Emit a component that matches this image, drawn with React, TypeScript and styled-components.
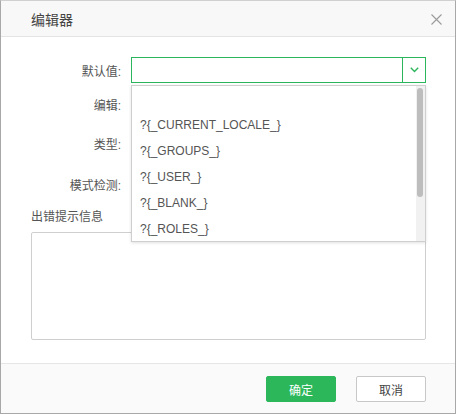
import React from "react";
import styled, { createGlobalStyle } from "styled-components";

const Global = createGlobalStyle`
  html, body { margin: 0; padding: 0; background: #fff; }
  body { font-family: "Liberation Sans", Arial, "Noto Sans CJK SC", sans-serif; }
  * { box-sizing: border-box; }
`;

const Dialog = styled.div`
  width: 456px;
  height: 414px;
  border: 1px solid #a8a8a8;
  border-top-color: #d0d0d0;
  display: flex;
  flex-direction: column;
  background: #fff;
  position: relative;
`;

const Header = styled.div`
  height: 36px;
  flex: none;
  background: #f8f8f8;
  border-bottom: 1px solid #e4e4e4;
  display: flex;
  align-items: center;
  justify-content: space-between;
  padding: 0 13px 0 30px;
`;

const Title = styled.div`
  font-size: 14px;
  color: #444;
`;

const Close = styled.button`
  border: none;
  background: transparent;
  padding: 0;
  width: 12px;
  height: 12px;
  display: flex;
  align-items: center;
  justify-content: center;
  margin-top: 1px;
`;

const Body = styled.div`
  flex: 1;
  padding: 20px 29px 0 30px;
  display: flex;
  flex-direction: column;
`;

const Row = styled.div<{ $mt: number }>`
  display: flex;
  align-items: center;
  height: 26px;
  margin-top: ${(p) => p.$mt}px;
  position: relative;
`;

const Label = styled.div`
  width: 91px;
  padding-right: 1px;
  text-align: right;
  font-size: 12px;
  color: #555;
  flex: none;
`;

const Field = styled.div`
  flex: 1;
  margin-left: 9px;
  position: relative;
  height: 100%;
`;

const Select = styled.div`
  height: 26px;
  border: 1px solid #2bb55c;
  display: flex;
  background: #fff;
`;

const SelectInput = styled.div`
  flex: 1;
`;

const SelectArrow = styled.div`
  width: 23px;
  border-left: 1px solid #2bb55c;
  display: flex;
  align-items: center;
  justify-content: center;
`;

const Dropdown = styled.div`
  position: absolute;
  top: 28px;
  left: 0;
  right: 0;
  height: 157px;
  background: #fff;
  border: 1px solid #cfcfcf;
  box-shadow: 0 1px 3px rgba(0, 0, 0, 0.12);
  z-index: 10;
  overflow: hidden;
`;

const Item = styled.div`
  height: 26px;
  line-height: 26px;
  padding-left: 8px;
  font-size: 12px;
  color: #555;
  white-space: nowrap;
`;

const Track = styled.div`
  position: absolute;
  top: 0;
  right: 0;
  width: 9px;
  bottom: 0;
  background: #f1f1f1;
`;

const Thumb = styled.div`
  position: absolute;
  top: 2px;
  left: 1px;
  width: 6px;
  height: 109px;
  border-radius: 3px;
  background: #bdbdbd;
`;

const MsgLabel = styled.div`
  font-size: 12px;
  color: #555;
  margin-top: 12px;
  line-height: 16px;
`;

const TextArea = styled.div`
  margin-top: 7px;
  height: 108px;
  border: 1px solid #cfcfcf;
  border-radius: 2px;
  background: #fff;
`;

const Footer = styled.div`
  height: 50px;
  flex: none;
  background: #fafafa;
  border-top: 1px solid #e6e6e6;
  display: flex;
  justify-content: flex-end;
  align-items: flex-start;
  padding: 12px 29px 0 0;
  gap: 20px;
`;

const Button = styled.button<{ $primary?: boolean }>`
  width: 70px;
  height: 26px;
  border-radius: 2px;
  font-size: 12px;
  font-family: "Liberation Sans", Arial, "Noto Sans CJK SC", sans-serif;
  cursor: pointer;
  border: 1px solid ${(p) => (p.$primary ? "#2bb75a" : "#c8c8c8")};
  background: ${(p) => (p.$primary ? "#2bb75a" : "#fff")};
  color: ${(p) => (p.$primary ? "#fff" : "#444")};
  padding: 0;
`;

const items = [
  "",
  "?{_CURRENT_LOCALE_}",
  "?{_GROUPS_}",
  "?{_USER_}",
  "?{_BLANK_}",
  "?{_ROLES_}",
];

export default function App() {
  return (
    <>
      <Global />
      <Dialog>
        <Header>
          <Title>编辑器</Title>
          <Close aria-label="close">
            <svg width="11" height="11" viewBox="0 0 11 11">
              <path d="M0.5 0.5 L10.5 10.5 M10.5 0.5 L0.5 10.5" stroke="#9a9a9a" strokeWidth="1.1" fill="none" />
            </svg>
          </Close>
        </Header>
        <Body>
          <Row $mt={0} style={{ zIndex: 5 }}>
            <Label>默认值:</Label>
            <Field>
              <Select>
                <SelectInput />
                <SelectArrow>
                  <svg width="9" height="6" viewBox="0 0 9 6">
                    <path d="M0.8 0.8 L4.5 4.5 L8.2 0.8" stroke="#2bb55c" strokeWidth="1.4" fill="none" />
                  </svg>
                </SelectArrow>
              </Select>
              <Dropdown>
                {items.map((t, i) => (
                  <Item key={i}>{t}</Item>
                ))}
                <Track>
                  <Thumb />
                </Track>
              </Dropdown>
            </Field>
          </Row>
          <Row $mt={8}>
            <Label>编辑:</Label>
          </Row>
          <Row $mt={13}>
            <Label>类型:</Label>
          </Row>
          <Row $mt={15}>
            <Label>模式检测:</Label>
          </Row>
          <MsgLabel>出错提示信息</MsgLabel>
          <TextArea />
        </Body>
        <Footer>
          <Button $primary>确定</Button>
          <Button>取消</Button>
        </Footer>
      </Dialog>
    </>
  );
}
